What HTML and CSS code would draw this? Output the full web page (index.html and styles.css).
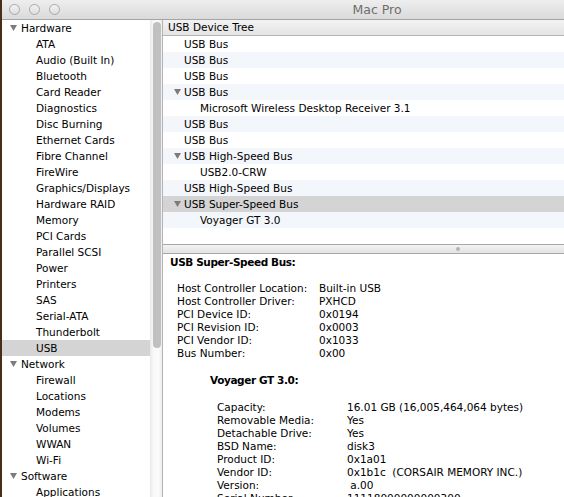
FILE: index.html
```html
<!DOCTYPE html>
<html lang="en">
<head>
    <meta charset="UTF-8">
    <title>Mac Pro - System Information</title>
    <link rel="stylesheet" href="styles.css">
</head>
<body>
    <div class="window">
        <div class="titlebar">
            <div class="lights">
                <span class="light"></span>
                <span class="light"></span>
                <span class="light"></span>
            </div>
            <div class="title">Mac Pro</div>
        </div>

        <div class="main">
            <div class="sidebar">
                <div class="group"><span class="tri"></span>Hardware</div>
                <div class="item">ATA</div>
                <div class="item">Audio (Built In)</div>
                <div class="item">Bluetooth</div>
                <div class="item">Card Reader</div>
                <div class="item">Diagnostics</div>
                <div class="item">Disc Burning</div>
                <div class="item">Ethernet Cards</div>
                <div class="item">Fibre Channel</div>
                <div class="item">FireWire</div>
                <div class="item">Graphics/Displays</div>
                <div class="item">Hardware RAID</div>
                <div class="item">Memory</div>
                <div class="item">PCI Cards</div>
                <div class="item">Parallel SCSI</div>
                <div class="item">Power</div>
                <div class="item">Printers</div>
                <div class="item">SAS</div>
                <div class="item">Serial-ATA</div>
                <div class="item">Thunderbolt</div>
                <div class="item sel">USB</div>
                <div class="group"><span class="tri"></span>Network</div>
                <div class="item">Firewall</div>
                <div class="item">Locations</div>
                <div class="item">Modems</div>
                <div class="item">Volumes</div>
                <div class="item">WWAN</div>
                <div class="item">Wi-Fi</div>
                <div class="group"><span class="tri"></span>Software</div>
                <div class="item">Applications</div>
            </div>

            <div class="vscroll"><div class="thumb"></div></div>

            <div class="content">
                <div class="tree">
                    <div class="tree-head">USB Device Tree</div>
                    <div class="node">USB Bus</div>
                    <div class="node alt">USB Bus</div>
                    <div class="node">USB Bus</div>
                    <div class="node open alt"><span class="tri"></span>USB Bus</div>
                    <div class="node child">Microsoft Wireless Desktop Receiver 3.1</div>
                    <div class="node alt">USB Bus</div>
                    <div class="node">USB Bus</div>
                    <div class="node open alt"><span class="tri"></span>USB High-Speed Bus</div>
                    <div class="node child">USB2.0-CRW</div>
                    <div class="node alt">USB High-Speed Bus</div>
                    <div class="node open sel"><span class="tri"></span>USB Super-Speed Bus</div>
                    <div class="node child alt">Voyager GT 3.0</div>
                </div>

                <div class="splitter"><span class="grip"></span></div>

                <div class="details">
                    <div class="heading">USB Super-Speed Bus:</div>
                    <div class="props">
                        <span>Host Controller Location:</span><span>Built-in USB</span>
                        <span>Host Controller Driver:</span><span>PXHCD</span>
                        <span>PCI Device ID:</span><span>0x0194</span>
                        <span>PCI Revision ID:</span><span>0x0003</span>
                        <span>PCI Vendor ID:</span><span>0x1033</span>
                        <span>Bus Number:</span><span>0x00</span>
                    </div>

                    <div class="heading sub">Voyager GT 3.0:</div>
                    <div class="props sub">
                        <span>Capacity:</span><span>16.01 GB (16,005,464,064 bytes)</span>
                        <span>Removable Media:</span><span>Yes</span>
                        <span>Detachable Drive:</span><span>Yes</span>
                        <span>BSD Name:</span><span>disk3</span>
                        <span>Product ID:</span><span>0x1a01</span>
                        <span>Vendor ID:</span><span>0x1b1c  (CORSAIR MEMORY INC.)</span>
                        <span>Version:</span><span> a.00</span>
                        <span>Serial Number:</span><span>11118000000000300</span>
                    </div>
                </div>
            </div>
        </div>
    </div>
</body>
</html>
```

FILE: styles.css
```css
body {
    margin: 0;
    background: #4a2d15;
    overflow: hidden;
    font-family: "DejaVu Sans", sans-serif;
    font-size: 10.5px;
    color: #000;
}
.window {
    margin-left: 2px;
    width: 750px;
    height: 497px;
    background: #fff;
    display: flex;
    flex-direction: column;
    overflow: hidden;
}

/* title bar */
.titlebar {
    height: 19px;
    flex: none;
    border-bottom: 1px solid #a4a4a4;
    background: linear-gradient(#eeeeee, #dadada);
    display: grid;
    grid-template-columns: 1fr auto 1fr;
    align-items: center;
}
.lights {
    display: flex;
    gap: 9px;
    padding-left: 7px;
}
.light {
    width: 9px;
    height: 9px;
    border-radius: 50%;
    border: 1px solid #a9a9a9;
    background: linear-gradient(#f2f2f2, #dedede);
}
.title {
    font-size: 12.5px;
    color: #6e6e6e;
}

.main {
    flex: 1;
    display: flex;
    min-height: 0;
}

/* disclosure triangle */
.tri {
    display: inline-block;
    width: 7px;
    height: 6px;
    background: #7c7c7c;
    clip-path: polygon(0 0, 100% 0, 50% 100%);
}

/* source list */
.sidebar {
    width: 148px;
    flex: none;
}
.group, .item {
    height: 16px;
    line-height: 16px;
    white-space: nowrap;
}
.group {
    display: flex;
    align-items: center;
    padding-left: 8px;
}
.group .tri {
    margin-right: 4px;
}
.item {
    padding-left: 34px;
}
.sel {
    background: #d4d4d4;
}

.vscroll {
    width: 13px;
    flex: none;
    border-right: 1px solid #b3b3b3;
    background: linear-gradient(to right, #e9e9e9, #f9f9f9 30%, #fbfbfb 70%, #eeeeee);
    padding-top: 2px;
    box-sizing: border-box;
}
.thumb {
    margin-left: 3px;
    width: 8px;
    height: 326px;
    border-radius: 4px;
    background: #c0c0c0;
}

/* right side */
.content {
    flex: 1;
    display: flex;
    flex-direction: column;
    min-width: 0;
}
.tree {
    height: 224px;
    flex: none;
}
.tree-head {
    height: 15px;
    line-height: 15px;
    padding-left: 5px;
    border-bottom: 1px solid #b6b6b6;
    background: linear-gradient(#f3f3f3, #e4e4e4);
}
.node {
    height: 16px;
    line-height: 16px;
    padding-left: 21px;
    white-space: nowrap;
}
.node.open {
    display: flex;
    align-items: center;
    padding-left: 11px;
}
.node.open .tri {
    margin-right: 3px;
}
.node.child {
    padding-left: 37px;
}
.alt {
    background: #f3f6fa;
}
.node.sel {
    background: #d4d4d4;
}

.splitter {
    height: 8px;
    flex: none;
    border-top: 1px solid #a8a8a8;
    border-bottom: 1px solid #a8a8a8;
    background: linear-gradient(#f3f3f3, #e3e3e3);
    display: flex;
    justify-content: center;
    align-items: center;
}
.grip {
    width: 4px;
    height: 4px;
    border-radius: 50%;
    background: #b4b4b4;
}

.details {
    padding-top: 2px;
    line-height: 13px;
}
.heading {
    font-weight: bold;
    letter-spacing: -0.4px;
    padding-left: 7px;
    margin-bottom: 13px;
}
.heading.sub {
    padding-left: 47px;
    margin-top: 14px;
    margin-bottom: 14px;
}
.props {
    display: grid;
    grid-template-columns: 142px auto;
    padding-left: 14px;
    white-space: pre;
}
.props.sub {
    grid-template-columns: 130px auto;
    padding-left: 54px;
}
```
